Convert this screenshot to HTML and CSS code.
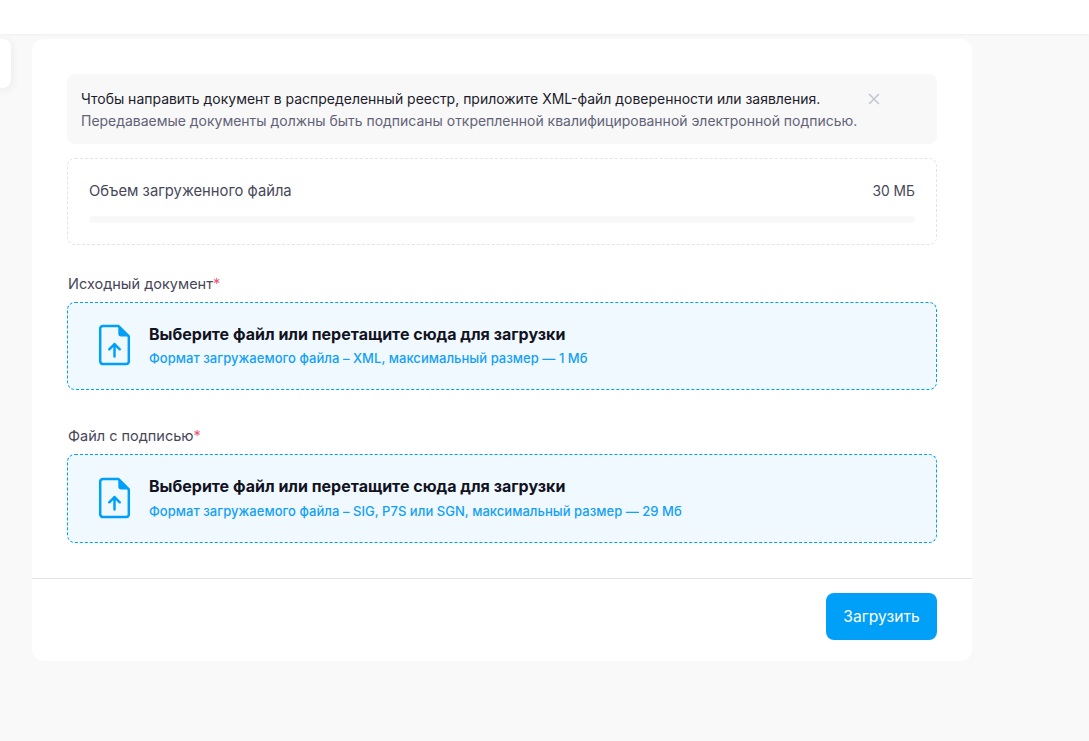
FILE: index.html
```html
<!DOCTYPE html>
<html lang="ru">
<head>
<meta charset="utf-8">
<title>Загрузка документа</title>
<link rel="stylesheet" href="styles.css">
</head>
<body>
<header class="topbar"></header>
<div class="page">
  <aside class="side"></aside>
  <main class="card">
    <div class="card-body">
      <div class="alert">
        <div class="alert-text">
          <p class="alert-main">Чтобы направить документ в распределенный реестр, приложите XML-файл доверенности или заявления.</p>
          <p class="alert-sub">Передаваемые документы должны быть подписаны открепленной квалифицированной электронной подписью.</p>
        </div>
        <svg class="alert-close" width="12" height="12" viewBox="0 0 12 12"><path d="M1 1l10 10M11 1L1 11" fill="none" stroke="#c3c5d0" stroke-width="1.5"/></svg>
      </div>
      <section class="quota">
        <div class="quota-row"><span>Объем загруженного файла</span><span class="quota-val">30 МБ</span></div>
        <div class="quota-bar"></div>
      </section>
      <div class="field">
        <label class="field-label">Исходный документ<span class="req">*</span></label>
        <div class="drop">
          <svg class="drop-icon" viewBox="0 0 34 44"><path d="M6 2h15l11 11v26a3 3 0 0 1-3 3H5a3 3 0 0 1-3-3V5a3 3 0 0 1 3-3z" fill="none" stroke="#00a0f8" stroke-width="2.6" stroke-linejoin="round"/><path d="M21 2v8a3 3 0 0 0 3 3h8z" fill="#00a0f8"/><path d="M17 34V21M11.5 26.500L17 21l5.500 5.500" fill="none" stroke="#00a0f8" stroke-width="2.600" stroke-linecap="round" stroke-linejoin="round"/></svg>
          <div>
            <div class="drop-title">Выберите файл или перетащите сюда для загрузки</div>
            <div class="drop-hint">Формат загружаемого файла – XML, максимальный размер — 1 Мб</div>
          </div>
        </div>
      </div>
      <div class="field">
        <label class="field-label">Файл с подписью<span class="req">*</span></label>
        <div class="drop drop-tall">
          <svg class="drop-icon" viewBox="0 0 34 44"><path d="M6 2h15l11 11v26a3 3 0 0 1-3 3H5a3 3 0 0 1-3-3V5a3 3 0 0 1 3-3z" fill="none" stroke="#00a0f8" stroke-width="2.6" stroke-linejoin="round"/><path d="M21 2v8a3 3 0 0 0 3 3h8z" fill="#00a0f8"/><path d="M17 34V21M11.5 26.500L17 21l5.500 5.500" fill="none" stroke="#00a0f8" stroke-width="2.600" stroke-linecap="round" stroke-linejoin="round"/></svg>
          <div>
            <div class="drop-title">Выберите файл или перетащите сюда для загрузки</div>
            <div class="drop-hint">Формат загружаемого файла – SIG, P7S или SGN, максимальный размер — 29 Мб</div>
          </div>
        </div>
      </div>
    </div>
    <footer class="card-foot"><button class="btn" type="button">Загрузить</button></footer>
  </main>
</div>
</body>
</html>
```
FILE: styles.css
```css
* { box-sizing: border-box; }
html, body { margin: 0; height: 100%; }
body { background: #f9f9f9; font-family: Inter, "Noto Sans", sans-serif; color: #4a4a5c; overflow: hidden; }
p { margin: 0; }
.topbar { height: 34px; background: #fff; box-shadow: 0 1px 3px rgba(30,30,60,.04); }
.page { display: flex; padding-top: 5px; align-items: flex-start; }
.side { width: 11px; height: 49px; margin-right: 21px; background: #fff; border-radius: 0 8px 8px 0; box-shadow: 0 2px 10px rgba(30,30,60,.08); }
.card { width: 940px; height: 622px; background: #fff; border-radius: 12px; display: flex; flex-direction: column; }
.card-body { flex: 1; padding: 35px 35px 0; }
.alert { height: 70px; padding: 15px 14px; background: #f8f8f9; border-radius: 8px; display: flex; align-items: flex-start; }
.alert-text { font-size: 13.98px; line-height: 21px; width: 786px; white-space: nowrap; }
.alert-main { color: #1c1c2b; margin-top: -1px; margin-bottom: 1px; }
.alert-sub { color: #626277; }
.alert-close { margin-left: 1px; margin-top: 4px; }
.quota { height: 87px; margin-top: 14px; padding: 22px 21px 0; border: 1px dashed #e2e3ed; border-radius: 8px; }
.quota-row { display: flex; justify-content: space-between; font-size: 14.75px; line-height: 20px; color: #474759; }
.quota-val { font-size: 13.8px; }
.quota-bar { height: 7px; margin-top: 15px; background: #f8f8f9; border-radius: 4px; }
.field { margin-top: 29px; }
.field + .field { margin-top: 36px; }
.field-label { display: block; font-size: 14.5px; line-height: 20px; color: #474759; margin-bottom: 8px; padding-left: 1px; }
.req { color: #ee5a72; }
.drop { height: 88px; padding: 0 30px; display: flex; align-items: center; gap: 18px; background: #f0f9ff; border: 1px dashed #00a0f8; border-radius: 8px; }
.drop-tall { height: 89px; }
.drop-icon { flex: none; width: 33px; height: 42px; margin-top: -2px; }
.drop-title { font-size: 16px; font-weight: 700; line-height: 20px; color: #13131f; margin-top: -2px; }
.drop-hint { margin-top: 6px; font-size: 13px; letter-spacing: .04px; font-weight: 500; line-height: 16px; color: #14a0f5; }
.drop-tall .drop-title { margin-top: -3px; }
.drop-tall .drop-hint { margin-top: 7px; }
.card-foot { height: 83px; padding: 14px 35px; border-top: 1px solid #e2e3ed; display: flex; justify-content: flex-end; align-items: flex-start; }
.btn { width: 111px; height: 47px; border: 0; border-radius: 8px; background: #00a0f8; color: #fff; font: 400 15.6px/20px Inter, sans-serif; }
```
